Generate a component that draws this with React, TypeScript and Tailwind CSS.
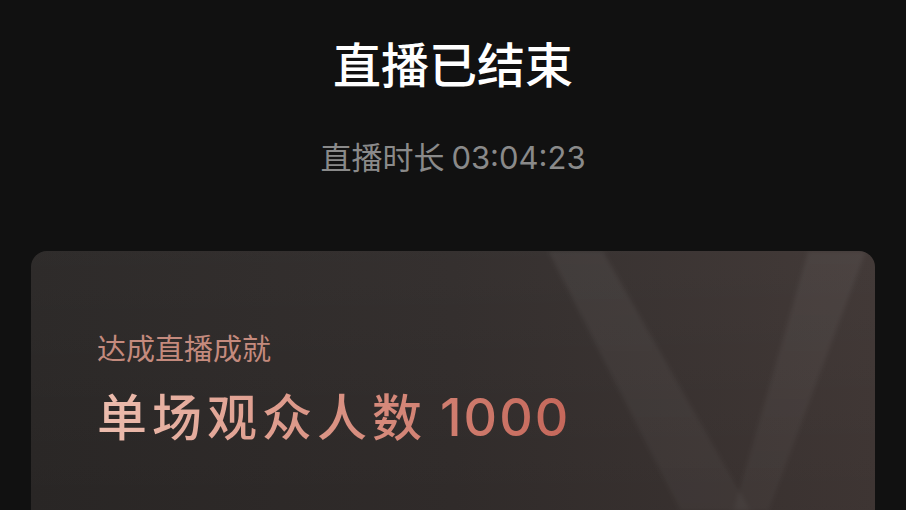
const font = { fontFamily: '"Noto Sans CJK SC", "Noto Sans", sans-serif' }
const numFont = { fontFamily: 'Inter, "Noto Sans CJK SC", sans-serif' }

function CrossMark() {
  return (
    <svg className="absolute left-0 top-0 h-[260px] w-full" viewBox="0 0 847 260" preserveAspectRatio="none">
      <defs>
        <linearGradient id="band" x1="0" y1="0" x2="0" y2="1">
          <stop offset="0" stopColor="#ffffff" stopOpacity="0.05" />
          <stop offset="1" stopColor="#ffffff" stopOpacity="0.03" />
        </linearGradient>
        <filter id="soft">
          <feGaussianBlur stdDeviation="2" />
        </filter>
      </defs>
      <g filter="url(#soft)">
        <polygon points="519,0 574,0 722,260 652,260" fill="url(#band)" />
        <polygon points="780,0 838,0 740,260 705,260" fill="url(#band)" />
      </g>
    </svg>
  )
}

function AchievementCard() {
  return (
    <div className="relative mx-[31px] mt-[78px] h-[300px] overflow-hidden rounded-[16px] bg-gradient-to-r from-[#282524] via-[#2f2a29] to-[#3d3432]">
      <div className="absolute inset-0 bg-gradient-to-b from-[#ffffff08] to-transparent" />
      <CrossMark />
      <div className="relative px-[66px] pt-[82px]">
        <p className="text-[29px] leading-none text-[#c48a7d]">达成直播成就</p>
        <p className="mt-[27px] inline-block bg-gradient-to-r from-[#ecbdae] to-[#c5675a] bg-clip-text text-[50px] font-medium leading-none tracking-[5px] text-transparent">
          单场观众人数<span style={numFont} className="ml-[13px] text-[52px] tracking-[2px]">1000</span>
        </p>
      </div>
    </div>
  )
}

export default function App() {
  return (
    <div className="h-[510px] w-full overflow-hidden bg-[#111111]" style={font}>
      <div className="flex flex-col items-center pt-[38px]">
        <h1 className="text-[48px] font-medium leading-none text-white">直播已结束</h1>
        <p className="mt-[54px] text-[31px] leading-none text-[#8a8a8a]">
          直播时长 <span style={numFont}>03:04:23</span>
        </p>
      </div>
      <AchievementCard />
    </div>
  )
}
